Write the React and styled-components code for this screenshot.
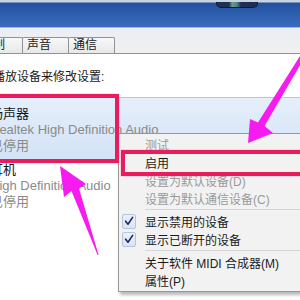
import React from 'react';
import styled, { createGlobalStyle } from 'styled-components';

const GlobalStyle = createGlobalStyle`
  html, body {
    margin: 0;
    padding: 0;
    background: #fff;
  }
  body {
    font-family: "Liberation Sans", "Noto Sans CJK SC", sans-serif;
  }
`;

const Screen = styled.div`
  position: relative;
  width: 300px;
  height: 300px;
  overflow: hidden;
  background: #fff;
`;

// the dialog is wider than the crop; its left part is cut off
const Window = styled.div`
  width: 376px;
  margin-left: -76px;
  display: flex;
  flex-direction: column;
`;

const TitleBar = styled.div`
  box-sizing: border-box;
  height: 28px;
  display: flex;
  align-items: flex-start;
  padding-left: 292px;
  background: linear-gradient(
    to bottom,
    #c9d2de 0,
    #c9d2de 2px,
    #22509f 3px,
    #2d5fae 55%,
    #3a6cbc 100%
  );
  border-bottom: 1px solid #a9b8ce;
`;

const CaptionPill = styled.div`
  margin-top: 2px;
  width: 42px;
  height: 6px;
  border-radius: 0 0 5px 5px;
  border: 1px solid #0f1b33;
  border-top: none;
  box-sizing: border-box;
  background: linear-gradient(
    to right,
    #1d2f56 0,
    #1d2f56 30%,
    #6a9e88 38%,
    #4f8184 50%,
    #1d2f56 60%,
    #1d2f56 100%
  );
`;

const TabStrip = styled.div`
  height: 25px;
  display: flex;
  align-items: flex-end;
  padding-left: 6px;
  background: linear-gradient(#eaeef3, #f0f0f0);
  border-bottom: 1px solid #8e939b;
`;

const Tab = styled.div`
  box-sizing: border-box;
  width: 47px;
  height: 16px;
  margin-right: -1px;
  padding-left: 4px;
  border: 1px solid #8e939b;
  border-bottom: none;
  border-radius: 2px 2px 0 0;
  background: linear-gradient(#f8f8f8, #e8e8e8);
  font-size: 12px;
  line-height: 15px;
  color: #1a1a1a;
  white-space: nowrap;
`;

const Content = styled.div`
  background: #fff;
  padding-top: 15px;
`;

const Prompt = styled.div`
  padding-left: 21px;
  font-size: 12px;
  line-height: 16px;
  color: #1a1a1a;
  white-space: nowrap;
`;

const DeviceList = styled.div`
  margin-top: 12px;
  border-top: 1px solid #c4c4c4;
`;

const DeviceItem = styled.div`
  padding: ${p => p.$top}px 0 ${p => p.$bottom}px 66px;
  background: ${p =>
    p.$selected ? 'linear-gradient(#e6effb, #d2e2f6)' : 'transparent'};
`;

const DeviceLine = styled.div`
  font-size: 13px;
  line-height: 16px;
  white-space: nowrap;
  color: ${p => (p.$muted ? '#8a8a8a' : '#151515')};
`;

const Menu = styled.div`
  position: absolute;
  left: 118px;
  top: 133px;
  width: 200px;
  padding: 1px 0 2px;
  background: #f2f2f2;
  border: 1px solid #979797;
  box-shadow: 2px 3px 3px rgba(0, 0, 0, 0.28);
  font-size: 12px;
`;

const MenuItem = styled.div`
  display: flex;
  align-items: center;
  height: 18px;
  white-space: nowrap;
  color: ${p => (p.$disabled ? '#9a9a9a' : '#1a1a1a')};
`;

const Gutter = styled.div`
  width: 26px;
  flex-shrink: 0;
  display: flex;
  align-items: center;
  padding-left: 3px;
  box-sizing: border-box;
`;

const CheckBox = styled.div`
  box-sizing: border-box;
  width: 14px;
  height: 15px;
  border: 1px solid #b3c6dd;
  border-radius: 2px;
  background: linear-gradient(#eaf0f8, #dbe5f2);
  display: flex;
  align-items: center;
  justify-content: center;
`;

const Separator = styled.div`
  height: 1px;
  margin: 2px 0 2px 26px;
  background: #d6d6d6;
`;

const Highlight = styled.div`
  position: absolute;
  box-sizing: border-box;
  left: ${p => p.$x}px;
  top: ${p => p.$y}px;
  width: ${p => p.$w}px;
  height: ${p => p.$h}px;
  border: 4px solid #e91c5e;
  box-shadow: 0 0 1px #f25a8a;
`;

const Arrows = styled.svg`
  position: absolute;
  left: 0;
  top: 0;
  pointer-events: none;
`;

const Check = () => (
  <svg width="10" height="10" viewBox="0 0 10 10">
    <path d="M1.6 5.2 L4 8.2 L8.6 1.4" fill="none" stroke="#1b2868" strokeWidth="1.6" strokeLinecap="round" strokeLinejoin="round" />
  </svg>
);

const menuItems = [
  { label: '测试', disabled: true },
  { label: '启用' },
  { label: '设置为默认设备(D)', disabled: true },
  { label: '设置为默认通信设备(C)', disabled: true },
  { sep: true },
  { label: '显示禁用的设备', checked: true },
  { label: '显示已断开的设备', checked: true },
  { sep: true },
  { label: '关于软件 MIDI 合成器(M)' },
  { label: '属性(P)' },
];

const App = () => {
  return (
    <Screen>
      <GlobalStyle />
      <Window>
        <TitleBar>
          <CaptionPill />
        </TitleBar>
        <TabStrip>
          <Tab>播放</Tab>
          <Tab>录制</Tab>
          <Tab>声音</Tab>
          <Tab>通信</Tab>
        </TabStrip>
        <Content>
          <Prompt>选择以下播放设备来修改设置:</Prompt>
          <DeviceList>
            <DeviceItem $selected $top={8} $bottom={6}>
              <DeviceLine>扬声器</DeviceLine>
              <DeviceLine $muted>Realtek High Definition Audio</DeviceLine>
              <DeviceLine $muted>已停用</DeviceLine>
            </DeviceItem>
            <DeviceItem $top={2} $bottom={6}>
              <DeviceLine>耳机</DeviceLine>
              <DeviceLine $muted>High Definition Audio</DeviceLine>
              <DeviceLine $muted>已停用</DeviceLine>
            </DeviceItem>
          </DeviceList>
        </Content>
      </Window>

      <Menu>
        {menuItems.map((item, i) =>
          item.sep ? (
            <Separator key={i} />
          ) : (
            <MenuItem key={i} $disabled={item.disabled}>
              <Gutter>
                {item.checked && (
                  <CheckBox>
                    <Check />
                  </CheckBox>
                )}
              </Gutter>
              {item.label}
            </MenuItem>
          )
        )}
      </Menu>

      <Highlight $x={-4} $y={94} $w={123} $h={69} />
      <Highlight $x={121} $y={150} $w={200} $h={26} />

      <Arrows width="300" height="300" viewBox="0 0 300 300">
        <polygon
          points="309,50 264.5,126 273,133 248,143 250,119 258,122.5 305,48"
          fill="#f61cf0"
        />
        <polygon
          points="60,166 86,184 79,188.5 98.6,255 97.6,255 71.5,191 64,197"
          fill="#f61cf0"
        />
      </Arrows>
    </Screen>
  );
};

export default App;
